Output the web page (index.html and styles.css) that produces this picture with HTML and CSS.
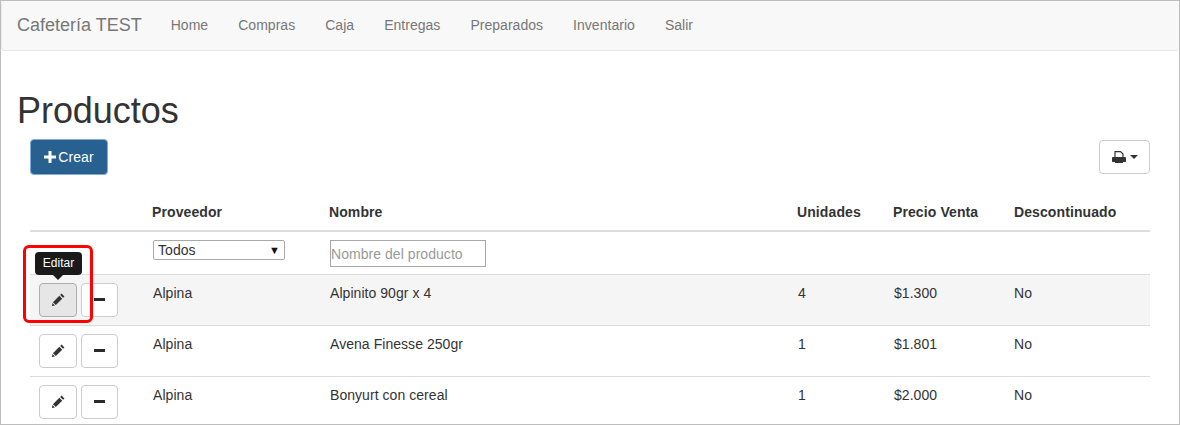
FILE: index.html
```html
<!DOCTYPE html>
<html lang="es">
<head>
  <meta charset="UTF-8">
  <title>Productos - Cafetería TEST</title>
  <link rel="stylesheet" href="styles.css">
</head>
<body>
  <div class="frame">
    <nav class="navbar">
      <a class="brand" href="#">Cafetería TEST</a>
      <ul class="nav-links">
        <li><a href="#">Home</a></li>
        <li><a href="#">Compras</a></li>
        <li><a href="#">Caja</a></li>
        <li><a href="#">Entregas</a></li>
        <li><a href="#">Preparados</a></li>
        <li><a href="#">Inventario</a></li>
        <li><a href="#">Salir</a></li>
      </ul>
    </nav>

    <h1>Productos</h1>

    <div class="content">
      <div class="toolbar">
        <button class="btn btn-primary" type="button">
          <svg class="icon-plus" viewBox="0 0 12 12"><path d="M4.5 0h3v4.5H12v3H7.5V12h-3V7.5H0v-3h4.5z"/></svg>
          Crear
        </button>
        <button class="btn btn-print" type="button">
          <svg class="icon-print" viewBox="0 0 14 12">
            <path class="print-paper" d="M3 6V.6h5.500L11 3v3M3 11.500h8"/>
            <path d="M0 7c0-.5.5-1 1-1h12c.5 0 1 .5 1 1v3.500c0 .3-.2.5-.5.5h-13c-.3 0-.5-.2-.5-.5z"/>
          </svg>
          <span class="caret"></span>
        </button>
      </div>

      <table class="products">
        <thead>
          <tr>
            <th class="col-actions"></th>
            <th class="col-prov">Proveedor</th>
            <th class="col-name">Nombre</th>
            <th class="col-units">Unidades</th>
            <th class="col-price">Precio Venta</th>
            <th>Descontinuado</th>
          </tr>
        </thead>
        <tbody>
          <tr class="filters">
            <td></td>
            <td>
              <div class="fake-select">Todos<span class="select-arrow">▼</span></div>
            </td>
            <td><input class="name-filter" type="text" placeholder="Nombre del producto"></td>
            <td></td>
            <td></td>
            <td></td>
          </tr>
          <tr class="hovered">
            <td class="actions">
              <button class="btn btn-icon is-active" type="button">
                <svg class="icon-pencil" viewBox="0 0 14 14"><path d="M10.300.6l3.100 3.100-1.500 1.500-3.100-3.100zM7.900 3l3.100 3.100-6.900 6.900-3.100-3.100zM.5 10.800l2.700 2.700L0 14z"/></svg>
              </button>
              <button class="btn btn-icon btn-minus" type="button"><span class="icon-minus"></span></button>
              <div class="tooltip">Editar</div>
              <div class="highlight"></div>
            </td>
            <td>Alpina</td>
            <td>Alpinito 90gr x 4</td>
            <td>4</td>
            <td>$1.300</td>
            <td>No</td>
          </tr>
          <tr>
            <td class="actions">
              <button class="btn btn-icon" type="button">
                <svg class="icon-pencil" viewBox="0 0 14 14"><path d="M10.300.6l3.100 3.100-1.500 1.500-3.100-3.100zM7.900 3l3.100 3.100-6.900 6.900-3.100-3.100zM.5 10.800l2.700 2.700L0 14z"/></svg>
              </button>
              <button class="btn btn-icon btn-minus" type="button"><span class="icon-minus"></span></button>
            </td>
            <td>Alpina</td>
            <td>Avena Finesse 250gr</td>
            <td>1</td>
            <td>$1.801</td>
            <td>No</td>
          </tr>
          <tr>
            <td class="actions">
              <button class="btn btn-icon" type="button">
                <svg class="icon-pencil" viewBox="0 0 14 14"><path d="M10.300.6l3.100 3.100-1.500 1.500-3.100-3.100zM7.900 3l3.100 3.100-6.900 6.900-3.100-3.100zM.5 10.800l2.700 2.700L0 14z"/></svg>
              </button>
              <button class="btn btn-icon btn-minus" type="button"><span class="icon-minus"></span></button>
            </td>
            <td>Alpina</td>
            <td>Bonyurt con cereal</td>
            <td>1</td>
            <td>$2.000</td>
            <td>No</td>
          </tr>
        </tbody>
      </table>
    </div>
  </div>
</body>
</html>
```

FILE: styles.css
```css
* {
  box-sizing: border-box;
}

body {
  margin: 0;
  font-family: "Liberation Sans", Arial, sans-serif;
  font-size: 14px;
  color: #333;
  background: #fff;
}

.frame {
  height: 425px;
  border: 1px solid #bdbdbd;
  overflow: hidden;
}

.navbar {
  display: flex;
  align-items: center;
  height: 50px;
  background: #f8f8f8;
  border: 1px solid #e7e7e7;
  border-width: 0 0 1px 1px;
  border-radius: 4px;
}

.brand {
  margin-left: 15px;
  font-size: 18px;
  color: #777;
  text-decoration: none;
}

.nav-links {
  display: flex;
  gap: 30px;
  margin: -1px 0 0 29px;
  padding: 0;
  list-style: none;
  letter-spacing: .03px;
}

.nav-links a {
  color: #777;
  text-decoration: none;
}

h1 {
  margin: 40px 0 0 16px;
  font-size: 36px;
  font-weight: 500;
  line-height: 40px;
  letter-spacing: -.05px;
  color: #333;
}

.content {
  margin: 8px 29px 0;
}

.toolbar {
  display: flex;
  justify-content: space-between;
  align-items: center;
  height: 36px;
  margin-bottom: 20px;
}

.btn {
  display: inline-flex;
  align-items: center;
  justify-content: center;
  padding: 0;
  background: #fff;
  border: 1px solid #ccc;
  border-radius: 4px;
  font-family: inherit;
  font-size: 14px;
  color: #333;
}

.btn-primary {
  gap: 2px;
  width: 78px;
  height: 36px;
  background: #286090;
  border-color: #84a9e0;
  color: #fff;
  letter-spacing: .1px;
}

.icon-plus {
  width: 12px;
  height: 12px;
  fill: #fff;
}

.btn-print {
  gap: 4px;
  width: 51px;
  height: 34px;
}

.icon-print {
  width: 14px;
  height: 12px;
  fill: #333;
}

.print-paper {
  fill: #fff;
  stroke: #333;
  stroke-width: 1.2;
}

.caret {
  width: 0;
  height: 0;
  border-top: 4px solid #333;
  border-left: 4px solid transparent;
  border-right: 4px solid transparent;
}

.products {
  width: 100%;
  table-layout: fixed;
  border-collapse: collapse;
}

.products th {
  height: 36px;
  padding: 0 8px 2px;
  text-align: left;
  font-weight: 700;
  font-size: 14px;
  letter-spacing: .1px;
  border-bottom: 2px solid #ddd;
}

.col-actions {
  width: 114px;
}

.col-prov {
  width: 177px;
}

.col-name {
  width: 468px;
}

.col-units {
  width: 96px;
}

.col-price {
  width: 121px;
}

.products td {
  height: 51px;
  padding: 8px 8px 8px 9px;
  vertical-align: top;
  line-height: 20px;
  border-top: 1px solid #ddd;
  letter-spacing: .05px;
}

.products td:last-child {
  padding-left: 8px;
}

.products .filters td {
  height: 41px;
  padding-bottom: 7px;
  border-top: 0;
}

.fake-select {
  display: flex;
  justify-content: space-between;
  align-items: center;
  width: 132px;
  height: 20px;
  padding: 0 4px 0 4px;
  border: 1px solid #a9a9a9;
  border-radius: 2px;
  color: #333;
}

.select-arrow {
  font-size: 11px;
  color: #111;
}

.name-filter {
  display: block;
  width: 156px;
  height: 27px;
  padding: 0;
  border: 1px solid #a9a9a9;
  font-family: inherit;
  font-size: 14px;
  letter-spacing: .05px;
}

.name-filter::placeholder {
  color: #999;
}

.hovered td {
  background: #f5f5f5;
}

.products td.actions {
  position: relative;
  padding: 8px 0 0 9px;
  white-space: nowrap;
}

.btn-icon {
  width: 38px;
  height: 34px;
  vertical-align: top;
}

.btn-minus {
  width: 37px;
}

.is-active {
  background: #e6e6e6;
  border-color: #adadad;
}

.icon-pencil {
  width: 13px;
  height: 13px;
  margin-bottom: 1px;
  fill: #333;
}

.icon-minus {
  display: block;
  width: 11px;
  height: 3px;
  margin-bottom: 2px;
  background: #2a2a2a;
}

.tooltip {
  position: absolute;
  left: 5px;
  top: -23px;
  width: 47px;
  height: 23px;
  background: #1a1a1a;
  border-radius: 4px;
  color: #fff;
  font-size: 12px;
  letter-spacing: 0;
  line-height: 23px;
  text-align: center;
}

.tooltip::after {
  content: "";
  position: absolute;
  left: 18px;
  top: 23px;
  border-top: 5px solid #1a1a1a;
  border-left: 5px solid transparent;
  border-right: 5px solid transparent;
}

.highlight {
  position: absolute;
  left: -7px;
  top: -30px;
  width: 70px;
  height: 78px;
  border: 3px solid #f00;
  border-radius: 6px;
}
```
